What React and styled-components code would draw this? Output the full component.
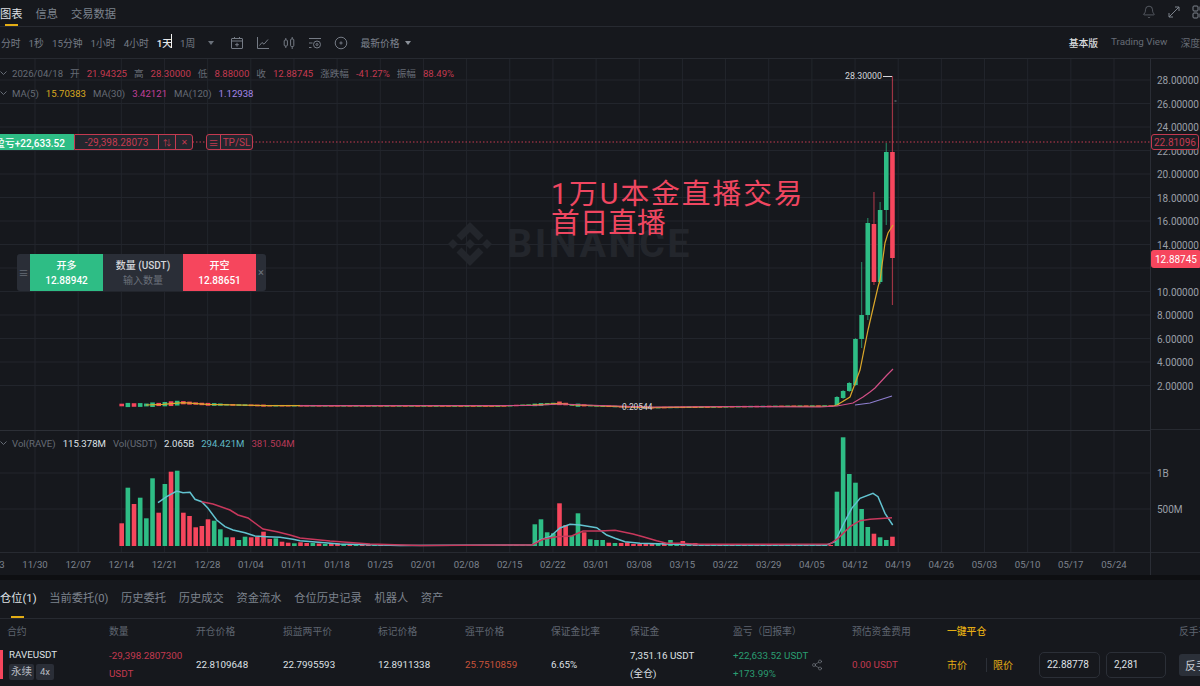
import React from "react";
import styled, { createGlobalStyle } from "styled-components";
import { Bell, Share2 } from "lucide-react";

const GREEN = "#2ebd85";
const RED = "#f6465d";
const DIM_RED = "#c43a50";
const YELLOW = "#e3ad14";
const GRID = "#22252c";
const LINE = "#272a31";

// volume bar heights in px, one per day from 12/14, negative = red day
const volumes = [
  -22.7, 58.3, -42, 48.3, 27.7, 67.7, -33.3, 62, -74.3, 75.3, -33.3, -30, -18.7, -20, -26.7,
  25.3, 16.7, 8.7, -8.7, 6, 9.3, -8.7, -9.3, -14.3, -7, 7.7, -4.3, -3.3, 2.7, -3.7,
  -3, 3, -2.5, 2, -3, -2, 2, -2, 2, -2, -1.5, 1.5, -1.5, 1.5, -1.5, 1, -1, 1, -1, 1,
  -1, 1, -1, -1, 1, -1, 1, -1, 1, -1, -1, 1, -1, 1, -1, 1, 1,
  21.7, 26.7, 13.7, 12.7, -42.7, -21, 10.3, 32.7, -13.7, 6.7, 6, 6, -3.3, 3, -3,
  -3.6, -2, -2, -2, -2, 2, -3, 6, 2.5, -5, 2, -3, 2, -2, 1.5, -1.5, 1.5, -1.5, 1.5, -1.5,
  1, -1, 1, -1, 1, -1, 1, -1, 1, -1, 1, -1, 1, -1,
  54.3, 108.7, 72, 63.3, 37, 19, -12.3, 8.7, 6, -9.3,
];

const dayX = (i) => 121.7 + 6.166 * i;

// the last ten days have real bodies: [top, bottom, wickTop, wickBottom]
const bigCandles = {
  116: [397, 405, 396, 406],
  117: [391, 398, 390, 399],
  118: [383, 391, 382, 392],
  119: [339, 385, 338, 386],
  120: [315, 339, 262, 348],
  121: [223, 315, 218, 320],
  122: [224, 282, 192, 285],
  123: [210, 282, 202, 284],
  124: [152, 210, 143, 225],
  125: [152, 258, 76, 305],
};

const ma5 = [
  [146, 405], [163, 404.3], [183, 402.7], [207, 404.3], [267, 405.7], [300, 405.7], [500, 406],
  [533, 405], [560, 403.3], [573, 405], [620, 406.7], [653, 407.7], [733, 406.7], [833, 406],
  [837, 405], [850, 397], [860, 370], [868, 330], [878, 287], [880, 280], [885, 243], [888, 233], [893, 225],
];
const ma30 = [
  [300, 405.7], [533, 405.5], [560, 404], [600, 405.5], [653, 407], [733, 406.5], [820, 407], [837, 406],
  [853, 403], [863, 397], [870, 392], [875, 388], [887, 375], [893, 369],
];
const ma120 = [[855, 405], [870, 403], [892, 396]];

const volTeal = [
  [158, 502.7], [166.7, 496.7], [176.7, 491], [183, 492.7], [190, 492.3], [195, 499.3], [201.7, 501.7],
  [208, 508.3], [216.7, 520], [225, 526.7], [233, 530], [245, 532.7], [255, 536], [266.7, 536.7],
  [280, 537.3], [293, 539.3], [300, 540.7], [340, 544], [400, 545.5], [532, 545], [540, 540], [550, 536.7],
  [560, 528], [570, 524.3], [580, 525], [596.7, 527.7], [606.7, 535], [615, 538.3], [625, 541.7],
  [640, 543.3], [666.7, 544], [700, 545], [826.7, 545], [835, 541.7], [843, 525], [851.7, 508.3],
  [860, 498.3], [873, 493.3], [878, 496.7], [885, 513.3], [892.7, 525],
];
const volPink = [
  [201.7, 501.7], [213, 504], [230, 510], [238, 515], [248, 518], [263, 529], [277, 531.7], [290, 535],
  [300, 538], [330, 541], [370, 544], [420, 545.5], [532, 545], [543, 539.3], [556.7, 536.7],
  [571.7, 536], [583, 531], [600, 531], [615, 530.3], [633, 534], [643, 536.7], [656.7, 540.7],
  [666.7, 543.3], [680, 543.3], [700, 544.3], [830, 544], [838, 538.3], [850, 526.7], [860, 520.7],
  [870, 519.3], [892, 517.7],
];

const toPath = (pts) => pts.map(([x, y], i) => `${i ? "L" : "M"}${x} ${y}`).join(" ");

const flatMid = (x) => {
  for (let i = 1; i < ma5.length; i++) {
    if (x <= ma5[i][0]) {
      const [x0, y0] = ma5[i - 1];
      const [x1, y1] = ma5[i];
      return y0 + ((y1 - y0) * (x - x0)) / (x1 - x0);
    }
  }
  return 405;
};

const priceRows = [
  "28.00000", "26.00000", "24.00000", "22.00000", "20.00000", "18.00000", "16.00000",
  "14.00000", "", "10.00000", "8.00000", "6.00000", "4.00000", "2.00000",
];

const dates = [
  "11/23", "11/30", "12/07", "12/14", "12/21", "12/28", "01/04", "01/11", "01/18", "01/25", "02/01",
  "02/08", "02/15", "02/22", "03/01", "03/08", "03/15", "03/22", "03/29", "04/05", "04/12", "04/19",
  "04/26", "05/03", "05/10", "05/17", "05/24",
];

const GlobalStyle = createGlobalStyle`
  html, body { margin: 0; padding: 0; background: #16181d; }
  * { box-sizing: border-box; }
`;

const Page = styled.div`
  width: 1200px;
  height: 686px;
  overflow: hidden;
  background: #16181d;
  font-family: Roboto, "Noto Sans CJK SC", sans-serif;
  color: #dfe1e5;
  display: flex;
  flex-direction: column;
`;

const TabBar = styled.div`
  height: 27px;
  flex: none;
  display: flex;
  align-items: center;
  gap: 13px;
  border-bottom: 1px solid ${LINE};
`;

const Tab = styled.div`
  position: relative;
  height: 26px;
  font-size: 11.25px;
  line-height: 29px;
  color: ${({ $active }) => ($active ? "#dfe1e5" : "#7d838d")};
  &::after {
    content: "";
    display: ${({ $active }) => ($active ? "block" : "none")};
    position: absolute;
    left: ${({ $underline }) => $underline}px;
    bottom: 0;
    width: 13px;
    height: 2px;
    background: ${YELLOW};
  }
`;

const BarIcons = styled.div`
  margin-left: auto;
  margin-right: -6px;
  margin-bottom: 3px;
  display: flex;
  align-items: center;
  gap: 11px;
  color: #7d838d;
`;

const Toolbar = styled.div`
  height: 32px;
  flex: none;
  display: flex;
  align-items: center;
  padding-left: 1px;
  border-bottom: 1px solid ${LINE};
  font-size: 9.8px;
  color: #757b85;
  overflow: hidden;
`;

const Interval = styled.div`
  position: relative;
  margin-right: 8px;
  white-space: nowrap;
  color: ${({ $active }) => ($active ? "#e6e8ea" : "inherit")};
  font-weight: ${({ $active }) => ($active ? 500 : 400)};
`;

const TextCursor = styled.span`
  position: absolute;
  right: 0;
  top: -2px;
  width: 1px;
  height: 14px;
  background: #f2f2f2;
`;

const Caret = styled.span`
  width: 0;
  height: 0;
  border-left: 3.5px solid transparent;
  border-right: 3.5px solid transparent;
  border-top: 4px solid ${({ $light }) => ($light ? "#8b9099" : "#6a707a")};
  margin-left: ${({ $gap }) => $gap}px;
`;

const ToolIcons = styled.div`
  display: flex;
  align-items: center;
  gap: 12px;
  margin-left: 16px;
  color: #757b85;
`;

const PriceType = styled.div`
  margin-left: 12px;
  display: flex;
  align-items: center;
  white-space: nowrap;
  color: #7d838d;
`;

const Views = styled.div`
  margin-left: auto;
  display: flex;
  gap: 13px;
  white-space: nowrap;
`;

const ViewOption = styled.span`
  color: ${({ $active }) => ($active ? "#d9dbde" : "#666c76")};
  font-weight: ${({ $active }) => ($active ? 500 : 400)};
`;

const ChartRow = styled.div`
  flex: none;
  height: 516px;
  display: flex;
`;

const Plot = styled.div`
  position: relative;
  width: 1150px;
  flex: none;
  overflow: hidden;
`;

const PlotSvg = styled.svg`
  display: block;
  width: 1150px;
  height: 494px;
`;

const DateAxis = styled.div`
  height: 22px;
  display: flex;
  align-items: center;
  margin-left: -29.74px;
`;

const DateLabel = styled.span`
  flex: 0 0 43.16px;
  text-align: center;
  font-size: 9.6px;
  color: #7d838d;
`;

const AxisColumn = styled.div`
  position: relative;
  width: 50px;
  flex: none;
  border-left: 1px solid #2a2d35;
  display: flex;
  flex-direction: column;
`;

const PriceAxis = styled.div`
  height: 371px;
  flex: none;
  padding: 10px 0 0 6px;
  border-bottom: 1px solid ${LINE};
`;

const VolumeAxis = styled.div`
  height: 123px;
  flex: none;
  padding: 25px 0 0 6px;
  border-bottom: 1px solid ${LINE};
`;

const AxisLabel = styled.div`
  height: ${({ $row }) => $row}px;
  display: flex;
  align-items: center;
  font-size: 10px;
  color: #9a9fa7;
`;

const PriceTag = styled.div`
  position: absolute;
  left: 0;
  top: ${({ $top }) => $top}px;
  width: ${({ $solid }) => ($solid ? 50 : 48)}px;
  height: ${({ $solid }) => ($solid ? 18 : 16)}px;
  display: flex;
  align-items: center;
  justify-content: center;
  font-size: 10px;
  border-radius: 3px;
  color: ${({ $solid }) => ($solid ? "#fff" : DIM_RED)};
  background: ${({ $solid }) => ($solid ? RED : "#1b1d23")};
  border: ${({ $solid }) => ($solid ? "none" : `1px solid ${DIM_RED}`)};
`;

const Legend = styled.div`
  position: absolute;
  left: 0;
  top: ${({ $top }) => $top}px;
  display: flex;
  flex-direction: column;
`;

const LegendRow = styled.div`
  height: 20px;
  display: flex;
  align-items: center;
  gap: 7px;
  font-size: 9.6px;
  white-space: nowrap;
  & > svg {
    margin-right: -2px;
  }
`;

const LegendText = styled.span`
  color: ${({ $tone }) => $tone || "#666c76"};
`;

const PositionBar = styled.div`
  position: absolute;
  left: 0;
  top: 75px;
  height: 16px;
  display: flex;
  align-items: stretch;
  font-size: 10px;
`;

const ProfitChip = styled.div`
  width: 74px;
  background: ${GREEN};
  color: #fff;
  font-weight: 500;
  display: flex;
  align-items: center;
  justify-content: flex-end;
  padding-right: 9px;
  white-space: nowrap;
  overflow: hidden;
`;

const BoxGroup = styled.div`
  display: flex;
  align-items: stretch;
  margin-left: ${({ $gap }) => $gap || 0}px;
  border: 1px solid ${DIM_RED};
  border-radius: ${({ $gap }) => ($gap ? "3px" : "0 3px 3px 0")};
  background: #23262e;
  color: ${DIM_RED};
`;

const BoxCell = styled.div`
  width: ${({ $w }) => $w}px;
  display: flex;
  align-items: center;
  justify-content: center;
  white-space: nowrap;
  border-left: ${({ $first }) => ($first ? "none" : `1px solid ${DIM_RED}`)};
  font-size: ${({ $small }) => ($small ? 8 : 10)}px;
`;

const Annotation = styled.div`
  position: absolute;
  left: 551px;
  top: 121px;
  font-size: 28.7px;
  line-height: 29px;
  color: #ef4660;
  white-space: nowrap;
`;

const AnnotationHead = styled.span`
  letter-spacing: 2px;
`;

const Watermark = styled.div`
  position: absolute;
  left: 448px;
  top: 163px;
  display: flex;
  align-items: center;
  gap: 15px;
  color: #23262c;
  font-size: 39.5px;
  font-weight: 700;
  letter-spacing: 2.5px;
  line-height: 40px;
`;

const QuickOrder = styled.div`
  position: absolute;
  left: 17px;
  top: 195px;
  width: 249px;
  height: 37px;
  display: flex;
  align-items: stretch;
  background: #2a2e37;
  border-radius: 3px;
  overflow: hidden;
  font-size: 10px;
`;

const Handle = styled.div`
  width: 13px;
  display: flex;
  align-items: center;
  justify-content: center;
  color: #666c76;
`;

const TradeButton = styled.div`
  width: ${({ $w }) => $w}px;
  padding-top: 1px;
  display: flex;
  flex-direction: column;
  align-items: center;
  justify-content: center;
  line-height: 15px;
  font-weight: 500;
  color: #fff;
  background: ${({ $side }) => ($side === "buy" ? GREEN : RED)};
`;

const AmountCell = styled.div`
  width: 80px;
  padding-top: 1px;
  display: flex;
  flex-direction: column;
  align-items: center;
  justify-content: center;
  line-height: 15px;
  font-weight: 500;
  color: #d3d5d9;
`;

const AmountHint = styled.span`
  color: #6a707a;
  font-weight: 400;
`;

const CloseMark = styled.div`
  flex: 1;
  display: flex;
  align-items: center;
  justify-content: center;
  color: #6f7580;
  font-size: 11px;
`;

const PeakLabel = styled.div`
  position: absolute;
  left: ${({ $left }) => $left}px;
  top: ${({ $top }) => $top}px;
  font-size: ${({ $size }) => $size}px;
  line-height: 12px;
  color: #d4d6da;
  white-space: nowrap;
`;

const Divider = styled.div`
  flex: none;
  height: 5px;
  background: #0e0f12;
`;

const Panel = styled.div`
  flex: 1;
  min-height: 0;
  display: flex;
  flex-direction: column;
`;

const PanelTabs = styled.div`
  height: 39px;
  flex: none;
  display: flex;
  align-items: center;
  gap: 12.7px;
  border-bottom: 1px solid ${LINE};
`;

const PanelTab = styled(Tab)`
  height: 38px;
  line-height: 38px;
`;

const Table = styled.div`
  display: grid;
  grid-template-columns: 102px 87px 87px 95px 87px 86px 79px 103px 119px 95px 232px 40px;
  padding-left: 7px;
  white-space: nowrap;
  font-size: 9.8px;
`;

const HeadCell = styled.div`
  height: 24px;
  display: flex;
  align-items: center;
  color: ${({ $gold }) => ($gold ? YELLOW : "#5f6570")};
  font-weight: ${({ $gold }) => ($gold ? 500 : 400)};
`;

const Cell = styled.div`
  height: 43px;
  display: flex;
  align-items: center;
  gap: 3px;
  line-height: 18px;
  color: ${({ $tone }) => $tone || "#dfe1e5"};
`;

const Stack = styled.div`
  display: flex;
  flex-direction: column;
`;

const SymbolCell = styled.div`
  position: relative;
  height: 43px;
  padding: 3px 0 0 2px;
  line-height: 18px;
`;

const SideBar = styled.span`
  position: absolute;
  left: -7px;
  top: 7px;
  width: 3px;
  height: 29px;
  background: ${RED};
`;

const Chips = styled.div`
  display: flex;
  gap: 2px;
`;

const Chip = styled.span`
  height: 16px;
  padding: 0 ${({ $wide }) => ($wide ? 2 : 4)}px;
  display: flex;
  align-items: center;
  border-radius: 2px;
  background: #2a2e37;
  color: #b7bbc2;
  font-size: ${({ $wide }) => ($wide ? 10.5 : 9.5)}px;
`;

const CloseActions = styled.div`
  height: 43px;
  display: flex;
  align-items: center;
  color: ${YELLOW};
  font-size: 10px;
`;

const ActionDivider = styled.span`
  width: 1px;
  height: 14px;
  background: #2c3038;
  margin: 0 6px 0 19px;
`;

const Field = styled.div`
  width: ${({ $w }) => $w}px;
  height: 26px;
  margin-left: ${({ $gap }) => $gap}px;
  padding-left: 7px;
  display: flex;
  align-items: center;
  border: 1px solid #2b2f37;
  border-radius: 5px;
  color: #dfe1e5;
`;

const FlipButton = styled.div`
  width: 40px;
  height: 22px;
  margin-top: 11px;
  padding-left: 6px;
  display: flex;
  align-items: center;
  border-radius: 3px 0 0 3px;
  background: #2b3039;
  color: #c8cbd0;
  font-size: 11px;
`;

const Chevron = () => (
  <svg width="7" height="5" viewBox="0 0 7 5" fill="none" stroke="#666c76" strokeWidth="1">
    <path d="M0.5 0.5L3.5 3.5L6.5 0.5" />
  </svg>
);

const StrokeIcon = ({ size = 14, children }) => (
  <svg width={size} height={size} viewBox="0 0 14 14" fill="none" stroke="currentColor" strokeWidth="1">
    {children}
  </svg>
);

const ToolGlyphs = () => (
  <ToolIcons>
    <StrokeIcon>
      <rect x="1.5" y="2.5" width="11" height="10" rx="0.5" />
      <path d="M1.5 5H12.5M4.5 1V3M9.5 1V3M7 6.8V10.6M5.1 8.7H8.9" />
    </StrokeIcon>
    <StrokeIcon>
      <path d="M1.5 1V12.5H13M3.5 9.5L6 6.5L8 8.2L12 3.5" />
    </StrokeIcon>
    <StrokeIcon>
      <rect x="2.2" y="4" width="3.2" height="6" rx="1" />
      <rect x="8.6" y="3" width="3.2" height="7.5" rx="1" />
      <path d="M3.8 2V4M3.8 10V12M10.2 1V3M10.2 10.5V13" />
    </StrokeIcon>
    <StrokeIcon>
      <path d="M1 2.5H13M1 7H4.5M1 11.5H3.5" />
      <circle cx="9" cy="8.5" r="3.5" />
      <circle cx="9" cy="8.5" r="1" />
    </StrokeIcon>
    <StrokeIcon>
      <circle cx="7" cy="7" r="5.8" />
      <path d="M7 5.4V8.6M5.4 7H8.6" />
    </StrokeIcon>
  </ToolIcons>
);

const ChartDrawing = () => (
  <PlotSvg viewBox="0 59 1150 494">
    {dates.map((d, i) => {
      const x = 35 + 43.16 * (i - 1);
      return x > 0 ? <line key={d} x1={x} x2={x} y1="59" y2="553" stroke={GRID} /> : null;
    })}
    {priceRows.map((_, i) => (
      <line key={i} x1="0" x2="1150" y1={80 + 23.5 * i} y2={80 + 23.5 * i} stroke={GRID} />
    ))}
    <line x1="0" x2="1150" y1="473" y2="473" stroke={GRID} />
    <line x1="0" x2="1150" y1="509" y2="509" stroke={GRID} />
    <line x1="0" x2="1150" y1="430.5" y2="430.5" stroke="#2c2f36" />
    <line x1="0" x2="1150" y1="552.5" y2="552.5" stroke={LINE} />

    {/* price candles */}
    {volumes.map((v, i) => {
      const x = dayX(i);
      const color = v > 0 ? GREEN : RED;
      const big = bigCandles[i];
      if (big) {
        const [top, bottom, wickTop, wickBottom] = big;
        return (
          <g key={i}>
            <line x1={x} x2={x} y1={wickTop} y2={wickBottom} stroke={color} strokeOpacity="0.6" strokeWidth="1.2" />
            <rect x={x - 2.3} y={top} width="4.6" height={bottom - top} fill={color} />
          </g>
        );
      }
      const h = Math.max(1.5, Math.sqrt(Math.abs(v)) * 0.55);
      const y = i < 4 ? 405 : flatMid(x);
      return <rect key={i} x={x - 2.3} y={y - h / 2} width="4.6" height={h} fill={color} />;
    })}
    <rect x="894.5" y="100.5" width="2" height="1" fill="#7d838d" />

    <path d={toPath(ma5)} fill="none" stroke="#dba72a" strokeWidth="1.2" />
    <path d={toPath(ma30)} fill="none" stroke="#d24f86" strokeWidth="1.2" />
    <path d={toPath(ma120)} fill="none" stroke="#8f7fd0" strokeWidth="1.2" />
    <line x1="883" x2="892" y1="76.5" y2="76.5" stroke="#d4d6da" />

    {/* the open position */}
    <line x1="0" x2="1150" y1="142" y2="142" stroke={DIM_RED} strokeDasharray="1.5 2" />

    {/* volume */}
    {volumes.map((v, i) => (
      <rect
        key={i}
        x={dayX(i) - 2.3}
        y={546 - Math.abs(v)}
        width="4.6"
        height={Math.abs(v)}
        fill={v > 0 ? GREEN : RED}
      />
    ))}
    <path d={toPath(volTeal)} fill="none" stroke="#62c3d0" strokeWidth="1.5" />
    <path d={toPath(volPink)} fill="none" stroke="#c8385c" strokeWidth="1.5" />
  </PlotSvg>
);

const positionColumns = ["合约", "数量", "开仓价格", "损益两平价", "标记价格", "强平价格", "保证金比率", "保证金", "盈亏（回报率）", "预估资金费用"];

export default function App() {
  return (
    <>
      <GlobalStyle />
      <Page>
        <TabBar>
          <Tab $active $underline={5}>图表</Tab>
          <Tab>信息</Tab>
          <Tab>交易数据</Tab>
          <BarIcons>
            <Bell size={14} strokeWidth={1} />
            <StrokeIcon>
              <path d="M2 12L12 2M8 2H12V6M2 8V12H6" />
            </StrokeIcon>
            <StrokeIcon>
              <rect x="1" y="1" width="5" height="5" rx="1" />
              <rect x="8" y="1" width="5" height="5" rx="1" />
              <rect x="1" y="8" width="5" height="5" rx="1" />
              <rect x="8" y="8" width="5" height="5" rx="1" />
            </StrokeIcon>
          </BarIcons>
        </TabBar>

        <Toolbar>
          <Interval>分时</Interval>
          <Interval>1秒</Interval>
          <Interval>15分钟</Interval>
          <Interval>1小时</Interval>
          <Interval>4小时</Interval>
          <Interval $active>1天<TextCursor /></Interval>
          <Interval>1周</Interval>
          <Caret $gap={5} />
          <ToolGlyphs />
          <PriceType>
            最新价格
            <Caret $gap={5} $light />
          </PriceType>
          <Views>
            <ViewOption $active>基本版</ViewOption>
            <ViewOption>Trading View</ViewOption>
            <ViewOption>深度</ViewOption>
          </Views>
        </Toolbar>

        <ChartRow>
          <Plot>
            <ChartDrawing />
            <DateAxis>
              {dates.map((d) => (
                <DateLabel key={d}>{d}</DateLabel>
              ))}
            </DateAxis>

            <Watermark>
              <svg width="44" height="44" viewBox="0 0 24 24" fill="currentColor">
                <path d="M16.624 13.9202l2.7175 2.7154-7.353 7.353-7.353-7.352 2.7175-2.7164 4.6355 4.6595 4.6356-4.6595zm4.6366-4.6366L24 12l-2.7154 2.7164L18.5682 12l2.6924-2.7164zm-9.272.001l2.7163 2.6914-2.7164 2.7174v-.001L9.2721 12l2.7164-2.7154zm-9.2722-.001L5.4088 12l-2.6914 2.6924L0 12l2.7164-2.7164zM11.9885.0115l7.353 7.329-2.7174 2.7154-4.6356-4.6356-4.6355 4.6595-2.7174-2.7154 7.353-7.353z" />
              </svg>
              BINANCE
            </Watermark>

            <Legend $top={4}>
              <LegendRow>
                <Chevron />
                <LegendText>2026/04/18</LegendText>
                <LegendText>开</LegendText>
                <LegendText $tone={DIM_RED}>21.94325</LegendText>
                <LegendText>高</LegendText>
                <LegendText $tone={DIM_RED}>28.30000</LegendText>
                <LegendText>低</LegendText>
                <LegendText $tone={DIM_RED}>8.88000</LegendText>
                <LegendText>收</LegendText>
                <LegendText $tone={DIM_RED}>12.88745</LegendText>
                <LegendText>涨跌幅</LegendText>
                <LegendText $tone={DIM_RED}>-41.27%</LegendText>
                <LegendText>振幅</LegendText>
                <LegendText $tone={DIM_RED}>88.49%</LegendText>
              </LegendRow>
              <LegendRow>
                <Chevron />
                <LegendText>MA(5)</LegendText>
                <LegendText $tone="#d9a81f">15.70383</LegendText>
                <LegendText>MA(30)</LegendText>
                <LegendText $tone="#c1409a">3.42121</LegendText>
                <LegendText>MA(120)</LegendText>
                <LegendText $tone="#a486ea">1.12938</LegendText>
              </LegendRow>
            </Legend>

            <PositionBar>
              <ProfitChip>盈亏+22,633.52</ProfitChip>
              <BoxGroup>
                <BoxCell $first $w={83}>-29,398.28073</BoxCell>
                <BoxCell $w={17} $small>⇅</BoxCell>
                <BoxCell $w={17} $small>✕</BoxCell>
              </BoxGroup>
              <BoxGroup $gap={13}>
                <BoxCell $first $w={13}>≡</BoxCell>
                <BoxCell $w={32}>TP/SL</BoxCell>
              </BoxGroup>
            </PositionBar>

            <Annotation>
              <AnnotationHead>1万U本金直播交易</AnnotationHead>
              <br />
              首日直播
            </Annotation>

            <QuickOrder>
              <Handle>≡</Handle>
              <TradeButton $side="buy" $w={73}>
                <span>开多</span>
                <span>12.88942</span>
              </TradeButton>
              <AmountCell>
                <span>数量 (USDT)</span>
                <AmountHint>输入数量</AmountHint>
              </AmountCell>
              <TradeButton $side="sell" $w={73}>
                <span>开空</span>
                <span>12.88651</span>
              </TradeButton>
              <CloseMark>×</CloseMark>
            </QuickOrder>

            <PeakLabel $left={845} $top={11} $size={8.8}>28.30000</PeakLabel>
            <PeakLabel $left={622} $top={342} $size={8.4}>0.20544</PeakLabel>

            <Legend $top={374}>
              <LegendRow>
                <Chevron />
                <LegendText>Vol(RAVE)</LegendText>
                <LegendText $tone="#dfe1e5">115.378M</LegendText>
                <LegendText>Vol(USDT)</LegendText>
                <LegendText $tone="#dfe1e5">2.065B</LegendText>
                <LegendText $tone="#5fb8c5">294.421M</LegendText>
                <LegendText $tone="#b83a58">381.504M</LegendText>
              </LegendRow>
            </Legend>
          </Plot>

          <AxisColumn>
            <PriceAxis>
              {priceRows.map((p, i) => (
                <AxisLabel key={i} $row={23.5}>{p}</AxisLabel>
              ))}
            </PriceAxis>
            <VolumeAxis>
              <AxisLabel $row={36}>1B</AxisLabel>
              <AxisLabel $row={36}>500M</AxisLabel>
            </VolumeAxis>
            <PriceTag $top={75}>22.81096</PriceTag>
            <PriceTag $top={191} $solid>12.88745</PriceTag>
          </AxisColumn>
        </ChartRow>

        <Divider />

        <Panel>
          <PanelTabs>
            <PanelTab $active $underline={11}>仓位(1)</PanelTab>
            <PanelTab>当前委托(0)</PanelTab>
            <PanelTab>历史委托</PanelTab>
            <PanelTab>历史成交</PanelTab>
            <PanelTab>资金流水</PanelTab>
            <PanelTab>仓位历史记录</PanelTab>
            <PanelTab>机器人</PanelTab>
            <PanelTab>资产</PanelTab>
          </PanelTabs>

          <Table>
            {positionColumns.map((c) => (
              <HeadCell key={c}>{c}</HeadCell>
            ))}
            <HeadCell $gold>一键平仓</HeadCell>
            <HeadCell>反手平仓</HeadCell>

            <SymbolCell>
              <SideBar />
              RAVEUSDT
              <Chips>
                <Chip $wide>永续</Chip>
                <Chip>4x</Chip>
              </Chips>
            </SymbolCell>
            <Cell $tone={DIM_RED}>
              <Stack>
                <span>-29,398.2807300</span>
                <span>USDT</span>
              </Stack>
            </Cell>
            <Cell>22.8109648</Cell>
            <Cell>22.7995593</Cell>
            <Cell>12.8911338</Cell>
            <Cell $tone="#c9533a">25.7510859</Cell>
            <Cell>6.65%</Cell>
            <Cell>
              <Stack>
                <span>7,351.16 USDT</span>
                <span>(全仓)</span>
              </Stack>
            </Cell>
            <Cell $tone="#2a9e72">
              <Stack>
                <span>+22,633.52 USDT</span>
                <span>+173.99%</span>
              </Stack>
              <Share2 size={12} strokeWidth={1} color="#8b9099" />
            </Cell>
            <Cell $tone={DIM_RED}>0.00 USDT</Cell>
            <CloseActions>
              市价
              <ActionDivider />
              限价
              <Field $w={61} $gap={26}>22.88778</Field>
              <Field $w={60} $gap={6}>2,281</Field>
            </CloseActions>
            <FlipButton>反手</FlipButton>
          </Table>
        </Panel>
      </Page>
    </>
  );
}
